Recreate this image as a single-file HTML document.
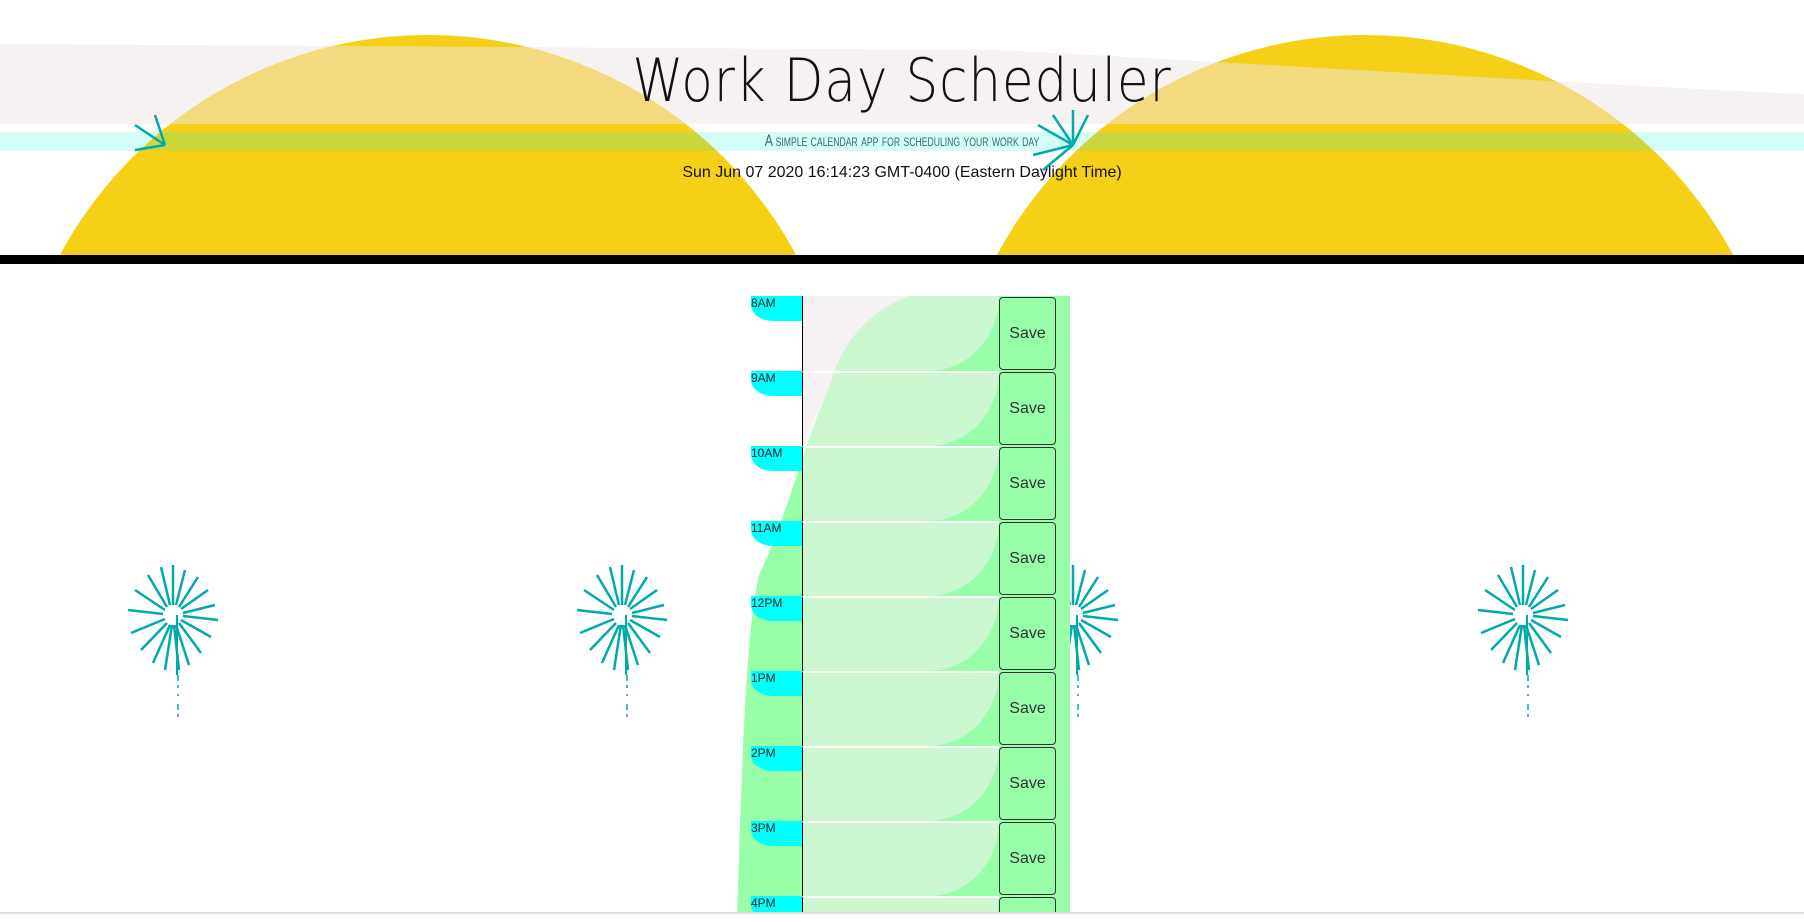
<!DOCTYPE html>
<html><head><meta charset="utf-8"><style>
*{margin:0;padding:0;box-sizing:border-box}
html,body{width:1804px;height:922px;overflow:hidden}
body{background:#fff;position:relative;font-family:"Liberation Sans","DejaVu Sans",sans-serif}
.abs{position:absolute}
header{position:absolute;left:0;top:0;width:1804px;height:255px;overflow:hidden}
h1{position:absolute;left:0;width:1804px;top:46px;text-align:center;font-family:"DejaVu Sans",sans-serif;font-weight:200;font-size:60px;letter-spacing:1px;color:#111;transform:scaleX(0.86)}
.sub{position:absolute;left:0;width:1804px;top:131px;text-align:center;font-size:17px;color:#3a6a6a;font-variant:small-caps;transform:scaleX(0.72)}
.date{position:absolute;left:0;width:1804px;top:164px;text-align:center;font-size:16px;color:#111}
.bar{position:absolute;left:0;top:255px;width:1804px;height:9px;background:#000}
.row{position:absolute;left:751px;width:305px;height:75px}
.lab{position:absolute;left:0;top:0;width:51px;height:25px;background:#00ffff;border-bottom-left-radius:22px 16px;font-size:12px;color:#222;line-height:14px}
.ta{position:absolute;left:51px;top:0;width:197px;height:75px;border-left:1px solid #000;border-top:2px solid #fff;background:rgba(246,240,242,0.55);border-bottom-right-radius:70px 75px}
.sv{position:absolute;left:248px;top:1px;width:57px;height:73px;border:1px solid #333;border-radius:4px;background:#98fea8;color:#333;font-size:16px;display:flex;align-items:center;justify-content:center}
</style></head><body>
<header>
<svg class="abs" style="left:0;top:0" width="1804" height="255">
<circle cx="428" cy="453" r="418" fill="#f5d016"/>
<circle cx="1365" cy="453" r="418" fill="#f5d016"/>
<path d="M0 44 L1000 50 C1300 66 1600 85 1804 94 L1804 124 L0 124 Z" fill="rgba(240,230,230,0.5)"/>
<rect x="0" y="132" width="1804" height="19" fill="rgba(40,245,215,0.2)"/>
<g stroke="#0aa" stroke-width="2.5" transform="translate(1073,145)">
<line x1="0" y1="0" x2="-35" y2="-20"/><line x1="0" y1="0" x2="-20" y2="-30"/><line x1="0" y1="0" x2="0" y2="-35"/><line x1="0" y1="0" x2="15" y2="-30"/><line x1="0" y1="0" x2="-40" y2="10"/><line x1="0" y1="0" x2="-30" y2="25"/>
</g>
<g stroke="#0aa" stroke-width="2.5" transform="translate(165,145)">
<line x1="0" y1="0" x2="-30" y2="-20"/><line x1="0" y1="0" x2="-10" y2="-30"/><line x1="0" y1="0" x2="-30" y2="5"/>
</g>
</svg>
<h1>Work Day Scheduler</h1>
<div class="sub">A simple calendar app for scheduling your work day</div>
<div class="date">Sun Jun 07 2020 16:14:23 GMT-0400 (Eastern Daylight Time)</div>
</header>
<div class="bar"></div>

<svg class="abs" style="left:0;top:264px" width="1804" height="658">
<defs>
<g id="fw" stroke="#0aa" stroke-width="2.5">
<line x1="0" y1="-10" x2="0" y2="-50"/><line x1="3" y1="-10" x2="12" y2="-45"/><line x1="6" y1="-8" x2="25" y2="-38"/><line x1="8" y1="-6" x2="35" y2="-25"/><line x1="10" y1="-2" x2="42" y2="-10"/><line x1="10" y1="1" x2="45" y2="5"/><line x1="8" y1="5" x2="38" y2="22"/><line x1="6" y1="8" x2="28" y2="38"/><line x1="3" y1="10" x2="16" y2="50"/><line x1="1" y1="10" x2="6" y2="55"/><line x1="-1" y1="10" x2="-8" y2="55"/><line x1="-3" y1="10" x2="-20" y2="48"/><line x1="-6" y1="8" x2="-32" y2="35"/><line x1="-8" y1="4" x2="-42" y2="18"/><line x1="-10" y1="-1" x2="-45" y2="-5"/><line x1="-8" y1="-5" x2="-38" y2="-25"/><line x1="-6" y1="-8" x2="-25" y2="-40"/><line x1="-3" y1="-10" x2="-12" y2="-48"/>
<line x1="4" y1="0" x2="4" y2="60" stroke-width="2"/>
<line x1="5" y1="60" x2="5" y2="108" stroke-width="1.5" stroke-dasharray="6 4 3 6 2 8"/>
</g>
</defs>
<use href="#fw" x="173" y="351"/>
<use href="#fw" x="622" y="351"/>
<use href="#fw" x="1073" y="351"/>
<use href="#fw" x="1523" y="351"/>
<rect x="0" y="648" width="1804" height="2" fill="#ddd"/>
</svg>

<svg class="abs" style="left:737px;top:296px" width="333" height="626">
<rect x="0" y="0" width="333" height="626" fill="#98fea8"/>
<path d="M0 0 L172 0 C120 20 100 60 91 95 C70 140 50 220 22 279 C10 330 5 450 0 626 Z" fill="#fff"/>
<path d="M65 0 L172 0 C120 20 100 60 91 95 C80 115 70 135 65 148 Z" fill="#f7f2f2"/>
</svg>

<div class="row" style="top:296px"><div class="lab">8AM</div><div class="ta" style="border-top:none"></div><div class="sv">Save</div></div>
<div class="row" style="top:371px"><div class="lab">9AM</div><div class="ta"></div><div class="sv">Save</div></div>
<div class="row" style="top:446px"><div class="lab">10AM</div><div class="ta"></div><div class="sv">Save</div></div>
<div class="row" style="top:521px"><div class="lab">11AM</div><div class="ta"></div><div class="sv">Save</div></div>
<div class="row" style="top:596px"><div class="lab">12PM</div><div class="ta"></div><div class="sv">Save</div></div>
<div class="row" style="top:671px"><div class="lab">1PM</div><div class="ta"></div><div class="sv">Save</div></div>
<div class="row" style="top:746px"><div class="lab">2PM</div><div class="ta"></div><div class="sv">Save</div></div>
<div class="row" style="top:821px"><div class="lab">3PM</div><div class="ta"></div><div class="sv">Save</div></div>
<div class="row" style="top:896px;height:16px;overflow:hidden"><div class="lab">4PM</div><div class="ta"></div><div class="sv">Save</div></div>
<div class="abs" style="left:0;top:912px;width:1804px;height:10px;background:#fff;border-top:2px solid #ddd"></div>
</body></html>
